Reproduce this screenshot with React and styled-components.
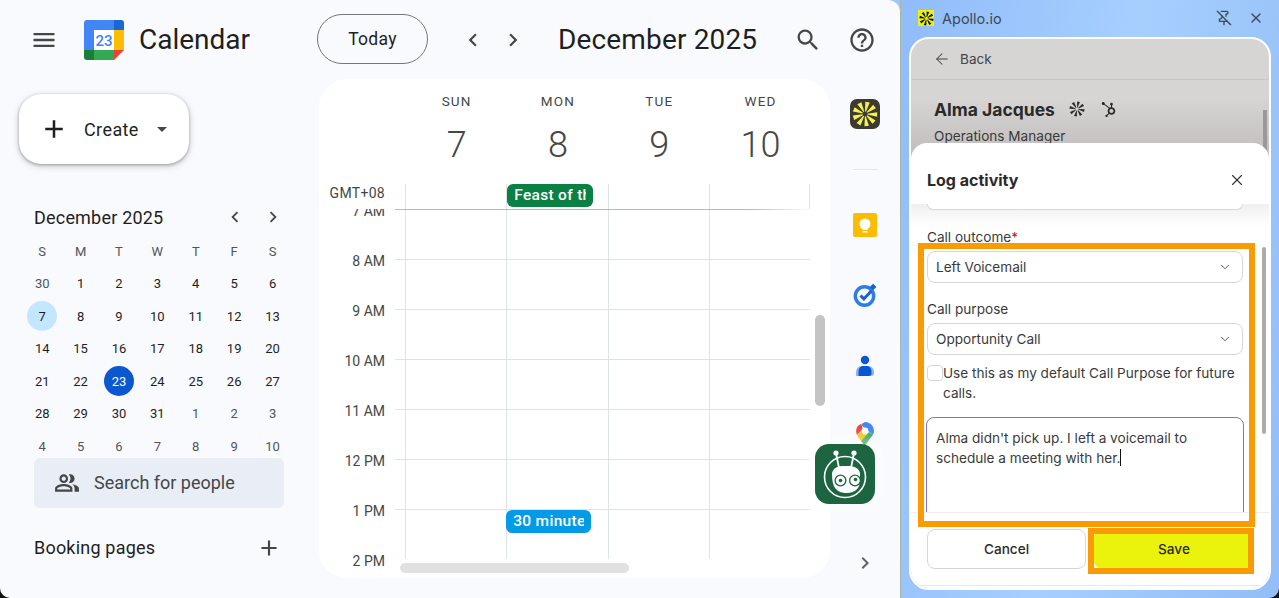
import React from 'react';
import styled, { createGlobalStyle } from 'styled-components';
import {
  MdMenu, MdSearch, MdHelpOutline, MdAdd, MdChevronLeft, MdChevronRight,
  MdArrowDropDown, MdOutlinePeopleAlt,
} from 'react-icons/md';
import { FaHubspot } from 'react-icons/fa';
import { ArrowLeft, X, ChevronDown, PinOff } from 'lucide-react';

const GOOGLE = `Roboto, "Open Sans", sans-serif`;
const APOLLO = `Inter, "Liberation Sans", sans-serif`;

const GlobalStyle = createGlobalStyle`
  html, body { margin: 0; padding: 0; height: 100%; overflow: hidden; }
  * { box-sizing: border-box; }
`;

const Root = styled.div`
  position: relative;
  display: flex;
  width: 1279px;
  height: 598px;
  overflow: hidden;
  background: linear-gradient(to right, #111 0 20px, #9cc5fb 20px 1260px, #111 1260px);
`;

/* ---------- calendar window ---------- */
const Window = styled.div`
  position: relative;
  display: flex;
  flex-direction: column;
  width: 900px;
  height: 598px;
  background: #f8fafd;
  border-radius: 0 12px 0 10px;
  font-family: ${GOOGLE};
  color: #1f1f1f;
`;
const TopBar = styled.header`
  display: flex;
  height: 79px;
  flex-shrink: 0;
  align-items: center;
`;
const Brand = styled.div`
  display: flex;
  align-items: center;
  width: 319px;
  padding-left: 30px;
  color: #444746;
`;
const AppName = styled.span`
  margin-left: 15px;
  font-size: 28px;
  color: #1f1f1f;
`;
const Logo = styled.svg`
  margin-left: 26px;
  flex-shrink: 0;
`;
const Nav = styled.div`
  display: flex;
  flex: 1;
  align-items: center;
  padding-right: 24px;
  color: #444746;
`;
const TodayButton = styled.button`
  width: 111px;
  height: 50px;
  margin: -1px 32px 0 -2px;
  border: 1px solid #747775;
  border-radius: 25px;
  background: transparent;
  color: #1f1f1f;
  font-family: ${GOOGLE};
  font-size: 17.5px;
  font-weight: 400;
  letter-spacing: 0.3px;
`;
const MonthTitle = styled.h1`
  margin: 0 0 0 32px;
  font-size: 28px;
  font-weight: 400;
  letter-spacing: 0.15px;
  color: #1f1f1f;
`;
const NavSpacer = styled.div`
  flex: 1;
`;
const IconGap = styled.span`
  display: inline-block;
  width: ${(p) => p.$w}px;
`;
const Body = styled.div`
  display: flex;
  flex: 1;
  min-height: 0;
`;

/* sidebar */
const Sidebar = styled.aside`
  display: flex;
  flex-direction: column;
  width: 319px;
  padding-top: 15px;
`;
const CreateButton = styled.button`
  display: flex;
  align-items: center;
  width: 170px;
  height: 70px;
  margin-left: 19px;
  padding: 0 0 0 20px;
  border: 0;
  border-radius: 22px;
  background: #fff;
  box-shadow: 0 1px 3px rgba(0, 0, 0, 0.3), 0 2px 6px 1px rgba(0, 0, 0, 0.15);
  color: #1f1f1f;
  font-family: ${GOOGLE};
  font-size: 18px;
  font-weight: 400;
  letter-spacing: 0.4px;
`;
const CreateLabel = styled.span`
  margin: 0 11px 0 15px;
`;
const MiniHead = styled.div`
  display: flex;
  align-items: center;
  height: 28px;
  margin-top: 39px;
  padding: 0 34px;
  font-size: 18px;
  letter-spacing: 0.2px;
  color: #1f1f1f;
`;
const MiniTitle = styled.span`
  flex: 1;
`;
const MiniArrows = styled.div`
  display: flex;
  gap: 16px;
  margin-right: 1px;
  color: #444746;
`;
const MiniGrid = styled.div`
  display: grid;
  grid-template-columns: repeat(7, 38.4px);
  grid-auto-rows: 32.5px;
  margin: 4px 0 0 23px;
`;
const MiniCell = styled.div`
  display: flex;
  align-items: center;
  justify-content: center;
  font-size: 13px;
  color: ${(p) => (p.$head || p.$muted ? '#50555a' : '#1f1f1f')};
`;
const DayDot = styled.span`
  display: flex;
  align-items: center;
  justify-content: center;
  width: 30px;
  height: 30px;
  border-radius: 50%;
  background: ${(p) => (p.$today ? '#0b57d0' : p.$picked ? '#c2e7ff' : 'transparent')};
  color: ${(p) => (p.$today ? '#fff' : 'inherit')};
`;
const PeopleSearch = styled.div`
  display: flex;
  align-items: center;
  width: 250px;
  height: 50px;
  margin: -5px 0 0 34px;
  padding-left: 20px;
  border-radius: 6px;
  background: #e9eef6;
  color: #444746;
  font-size: 18px;
`;
const PeopleLabel = styled.span`
  margin-left: 14px;
`;
const BookingRow = styled.div`
  display: flex;
  align-items: center;
  justify-content: space-between;
  height: 28px;
  margin-top: 26px;
  padding: 0 37px 0 34px;
  font-size: 18px;
  letter-spacing: 0.2px;
  color: #1f1f1f;
`;

/* day view card */
const Card = styled.main`
  position: relative;
  display: flex;
  flex-direction: column;
  width: 511px;
  height: 499px;
  border-radius: 28px;
  background: #fff;
  overflow: hidden;
`;
const DayHeads = styled.div`
  display: grid;
  grid-template-columns: repeat(4, 101.3px);
  padding: 14px 0 0 87px;
  text-align: center;
`;
const DayName = styled.div`
  height: 16px;
  line-height: 16px;
  font-size: 13.5px;
  letter-spacing: 1.2px;
  color: #444746;
`;
const DayNumber = styled.div`
  height: 40px;
  margin-top: 16px;
  line-height: 40px;
  font-size: 36px;
  font-weight: 300;
  color: #444746;
`;
const AllDayRow = styled.div`
  display: flex;
  height: 25px;
  margin-top: 19px;
  flex-shrink: 0;
`;
const TimeZone = styled.div`
  width: 86px;
  padding-right: 20px;
  line-height: 18px;
  text-align: right;
  font-size: 14px;
  letter-spacing: 0.3px;
  color: #444746;
`;
const AllDayCell = styled.div`
  width: 101.3px;
  border-left: 1px solid #dde3ea;
  ${(p) => p.$last && 'border-right: 1px solid #dde3ea;'}
`;
const EventChip = styled.div`
  width: ${(p) => p.$w}px;
  height: 23px;
  padding: 0 7px;
  border-radius: 6px;
  background: ${(p) => p.$color};
  color: #fff;
  font-size: 15.5px;
  font-weight: 500;
  letter-spacing: 0.3px;
  line-height: 23px;
`;
const ChipText = styled.span`
  display: block;
  overflow: hidden;
  white-space: nowrap;
`;
const HoursArea = styled.div`
  flex: 1;
  min-height: 0;
  overflow: hidden;
`;
const HourRow = styled.div`
  display: flex;
  height: 50px;
`;
const HourLabel = styled.div`
  width: 76px;
  height: 16px;
  margin-top: -6px;
  padding-right: 10px;
  line-height: 16px;
  text-align: right;
  font-size: 14px;
  color: #444746;
`;
const HourCells = styled.div`
  display: flex;
  width: 415px;
  padding-left: 10px;
  border-top: 1px solid #dde3ea;
  ${(p) => p.$strong && 'border-image: linear-gradient(to right, #b4b7bb 85%, #fff) 1;'}
`;
const HourCell = styled.div`
  position: relative;
  width: 101.3px;
  border-left: 1px solid #dde3ea;
`;
const FloatingEvent = styled.div`
  position: absolute;
  top: 0;
  left: -1px;
`;
const VScroll = styled.div`
  position: absolute;
  top: 236px;
  left: 496px;
  width: 10px;
  height: 91px;
  border-radius: 5px;
  background: #c4c4c4;
`;
const HScroll = styled.div`
  position: absolute;
  top: 484px;
  left: 81px;
  width: 229px;
  height: 10px;
  border-radius: 5px;
  background: #e1e1e1;
`;

/* right rail */
const Rail = styled.aside`
  display: flex;
  flex-direction: column;
  align-items: center;
  width: 70px;
  padding-top: 20px;
`;
const RailSlot = styled.div`
  display: flex;
  margin-top: ${(p) => p.$top}px;
`;
const RailRule = styled.div`
  width: 25px;
  height: 1px;
  margin-top: 40px;
  background: #e3e6ea;
`;
const ApolloBadge = styled.div`
  display: flex;
  align-items: center;
  justify-content: center;
  width: 30px;
  height: 30px;
  border-radius: 7px;
  background: #3d3a35;
`;
const BotButton = styled.div`
  position: absolute;
  top: 444px;
  left: 815px;
  width: 60px;
  height: 60px;
  box-shadow: 0 0 16px 6px rgba(255, 255, 255, 0.5);
  border-radius: 14px;
`;

/* ---------- apollo panel ---------- */
const Panel = styled.section`
  display: flex;
  flex-direction: column;
  width: 379px;
  height: 598px;
  padding-left: 8px;
  border-left: 1px solid #a9b6a6;
  border-radius: 0 0 10px 0;
  background: linear-gradient(100deg, #90bcfa 0%, #a7cffe 50%, #92bdf6 100%);
  font-family: ${APOLLO};
  color: #333;
`;
const TitleBar = styled.div`
  display: flex;
  align-items: center;
  height: 37px;
  padding: 0 15px 1px 9px;
  font-size: 14.5px;
  color: #3f4a55;
`;
const TitleLogo = styled.div`
  display: flex;
  align-items: center;
  justify-content: center;
  width: 16px;
  height: 16px;
  margin-right: 8px;
  background: #eef20e;
`;
const TitleName = styled.span`
  flex: 1;
`;
const TitleActions = styled.div`
  display: flex;
  align-items: center;
  gap: 16px;
`;
const Shell = styled.div`
  position: relative;
  width: 362px;
  height: 553px;
  border: 2px solid #fff;
  border-radius: 20px;
  background: linear-gradient(#d6d5d4 0 60px, #c3c0bf 110px);
  overflow: hidden;
`;
const BackRow = styled.div`
  display: flex;
  align-items: center;
  gap: 9px;
  height: 41px;
  padding: 0 0 1px 22px;
  border-bottom: 1px solid #c7c6c5;
  font-size: 13.6px;
  color: #444;
`;
const Person = styled.div`
  padding: 17px 23px 0;
`;
const PersonName = styled.div`
  display: flex;
  align-items: center;
  height: 24px;
  font-size: 17.5px;
  font-weight: 700;
  color: #2a2a2a;
`;
const PersonMark = styled.span`
  display: flex;
  margin-left: ${(p) => p.$left}px;
`;
const PersonRole = styled.div`
  margin-top: 5px;
  line-height: 20px;
  font-size: 13.6px;
  color: #3a3a3a;
`;
const ShellScroll = styled.div`
  position: absolute;
  top: 71px;
  right: 2px;
  width: 4px;
  height: 40px;
  background: #9c9897;
`;
const Sheet = styled.div`
  position: absolute;
  top: 104px;
  right: 0;
  bottom: 0;
  left: 0;
  display: flex;
  flex-direction: column;
  border-radius: 16px 16px 0 0;
  background: #fff;
`;
const SheetHead = styled.div`
  display: flex;
  align-items: center;
  justify-content: space-between;
  height: 61px;
  flex-shrink: 0;
  padding: 13px 23px 0 16px;
  font-size: 16px;
  font-weight: 700;
  color: #2a2a2a;
`;
const Form = styled.div`
  flex: 1;
  min-height: 0;
  padding: 0 26px 0 16px;
  overflow: hidden;
  background: linear-gradient(#efefef, #fff 22px);
`;
const FieldStub = styled.div`
  height: 6px;
  border: 1px solid #d9d9d9;
  border-top: 0;
  border-radius: 0 0 8px 8px;
  background: #fff;
`;
const FieldLabel = styled.div`
  height: 20px;
  margin-top: ${(p) => p.$top}px;
  line-height: 20px;
  font-size: 13.6px;
  color: #3a3a3a;
`;
const Required = styled.span`
  color: #b3261e;
`;
const Select = styled.div`
  display: flex;
  align-items: center;
  justify-content: space-between;
  height: 32px;
  margin-top: 4px;
  padding: 0 10px 1px 8px;
  border: 1px solid #d6d6d6;
  border-radius: 8px;
  background: #fff;
  font-size: 13.6px;
  color: #3a3a3a;
`;
const CheckRow = styled.label`
  display: flex;
  align-items: flex-start;
  margin-top: 8px;
  line-height: 20px;
  font-size: 13.6px;
  color: #3a3a3a;
`;
const CheckBox = styled.span`
  width: 16px;
  height: 16px;
  margin-top: 2px;
  flex-shrink: 0;
  border: 1px solid #d6d6d6;
  border-radius: 4px;
`;
const NoteBox = styled.div`
  height: 120px;
  margin: 14px -1px 0;
  padding: 10px 9px;
  border: 1px solid #8373cc;
  border-radius: 8px;
  line-height: 20px;
  font-size: 13.6px;
  color: #3a3a3a;
`;
const Caret = styled.span`
  display: inline-block;
  width: 1px;
  height: 17px;
  vertical-align: -3px;
  background: #111;
`;
const SheetFoot = styled.div`
  flex-shrink: 0;
  height: 76px;
  padding-top: 16px;
  border-top: 1px solid #eee;
`;
const FootButtons = styled.div`
  display: flex;
  gap: 8px;
  padding: 0 15px 16px 16px;
  border-bottom: 1px solid #e8e8e8;
`;
const ActionButton = styled.button`
  height: 40px;
  padding: 0 0 1px;
  border: 1px solid ${(p) => (p.$primary ? '#ebf30c' : '#d6d6d6')};
  border-radius: 8px;
  background: ${(p) => (p.$primary ? '#ebf30c' : '#fff')};
  color: #2a2a2a;
  font-family: ${APOLLO};
  font-size: 13.6px;
  font-weight: 500;
  ${(p) => (p.$primary ? 'flex: 1;' : 'width: 159px;')}
`;
const SheetScroll = styled.div`
  position: absolute;
  top: 104px;
  right: 3px;
  width: 4px;
  height: 187px;
  border-radius: 2px;
  background: #aeaaa8;
`;
const Callout = styled.div`
  position: absolute;
  top: ${(p) => p.$top}px;
  left: ${(p) => p.$left}px;
  width: ${(p) => p.$w}px;
  height: ${(p) => p.$h}px;
  border: 6px solid #f99b05;
  pointer-events: none;
`;

/* ---------- drawings ---------- */
const Burst = ({ size, color, spokes = 9 }) => (
  <svg width={size} height={size} viewBox="0 0 24 24">
    {Array.from({ length: spokes }, (_, i) => (
      <polygon
        key={i}
        points="11.6,9.8 9.9,0.8 14.1,0.8 12.4,9.8"
        fill={color}
        transform={`rotate(${(360 / spokes) * i + 12} 12 12)`}
      />
    ))}
  </svg>
);

const CalendarLogo = () => (
  <Logo width="40" height="40" viewBox="0 0 40 40">
    <path d="M3 0h27v10H10v20H0V3a3 3 0 0 1 3-3z" fill="#4285f4" />
    <path d="M30 0h7a3 3 0 0 1 3 3v7H30z" fill="#1967d2" />
    <rect x="30" y="10" width="10" height="20" fill="#fbbc04" />
    <rect x="10" y="30" width="20" height="10" fill="#34a853" />
    <path d="M0 30h10v10H3a3 3 0 0 1-3-3z" fill="#188038" />
    <path d="M30 30h10L30 40z" fill="#ea4335" />
    <rect x="10" y="10" width="20" height="20" fill="#fff" />
    <text x="20" y="26" textAnchor="middle" fontFamily="Roboto, sans-serif" fontSize="15" fontWeight="500" fill="#4285f4">23</text>
  </Logo>
);

const KeepIcon = () => (
  <svg width="24" height="24" viewBox="0 0 24 24">
    <rect width="24" height="24" rx="2" fill="#fbbc04" />
    <circle cx="12" cy="11" r="5.5" fill="#fff" />
    <rect x="9.5" y="15" width="5" height="2" fill="#fff" />
    <rect x="9.5" y="18" width="5" height="1.5" fill="#fff" />
  </svg>
);

const TasksIcon = () => (
  <svg width="24" height="24" viewBox="0 0 24 24">
    <circle cx="11.5" cy="13" r="9.2" fill="none" stroke="#2b7de9" strokeWidth="3.4" />
    <path d="M7.5 12.5l3.4 3.4 7.4-8" fill="none" stroke="#1a5fd0" strokeWidth="3" />
    <rect x="17.8" y="1.8" width="4.6" height="4.6" transform="rotate(45 20.1 4.1)" fill="#1a5fd0" />
  </svg>
);

const ContactIcon = () => (
  <svg width="24" height="24" viewBox="0 0 24 24">
    <circle cx="12" cy="6" r="4.2" fill="#0b57d0" />
    <path d="M3 22v-3.5c0-4 2.5-6.5 6-6.5h6c3.5 0 6 2.5 6 6.5V19a3 3 0 0 1-3 3z" fill="#8ab4f8" />
    <path d="M5.5 22v-4c0-3.5 2-6 4.5-6h4c2.500 0 4.500 2.500 4.500 6v1a3 3 0 0 1-3 3z" fill="#0b57d0" />
  </svg>
);

const MapsIcon = () => (
  <svg width="18" height="24" viewBox="0 0 18 24">
    <path d="M9 0a9 9 0 0 1 8 13L5 3a9 9 0 0 1 4-3z" fill="#4285f4" />
    <path d="M5 2A9 9 0 0 0 1.5 4.5 9 9 0 0 0 1 13l6-6z" fill="#ea4335" />
    <path d="M1 13c1 2.5 3 4.5 4 6l8-9-4-3z" fill="#fbbc04" />
    <path d="M5 19c1.5 2 3 3.5 4 5 1-2 3-5 8-11l-4-3z" fill="#34a853" />
    <circle cx="9" cy="9" r="3.4" fill="#fff" />
  </svg>
);

const BotIcon = () => (
  <svg width="60" height="60" viewBox="0 0 60 60">
    <rect width="60" height="60" rx="14" fill="#1c6540" />
    <circle cx="30" cy="33" r="20.5" fill="none" stroke="#fff" strokeWidth="1.6" />
    <path d="M21 9l3 15M39 9l-3 15" stroke="#fff" strokeWidth="1.8" />
    <circle cx="21" cy="9" r="2.6" fill="#fff" />
    <circle cx="39" cy="9" r="2.6" fill="#fff" />
    <path d="M17 30c0-4 4-8 10-8h7c7 0 11 4 11 8v7c0 8-6 12-13 12-5 0-9-1-12-5-2-3-3-8-3-14z" fill="#fff" />
    <circle cx="25.5" cy="36.5" r="5.4" fill="#fff" stroke="#1c6540" strokeWidth="1.3" />
    <circle cx="25.5" cy="36.5" r="1.8" fill="#1c6540" />
    <circle cx="40" cy="36.5" r="5.4" fill="#fff" stroke="#1c6540" strokeWidth="1.3" />
    <circle cx="40.5" cy="35.5" r="1.8" fill="#1c6540" />
  </svg>
);

/* ---------- data ---------- */
const MINI_HEAD = ['S', 'M', 'T', 'W', 'T', 'F', 'S'];
const MINI_DAYS = [
  30, 1, 2, 3, 4, 5, 6,
  7, 8, 9, 10, 11, 12, 13,
  14, 15, 16, 17, 18, 19, 20,
  21, 22, 23, 24, 25, 26, 27,
  28, 29, 30, 31, 1, 2, 3,
  4, 5, 6, 7, 8, 9, 10,
];
const WEEK = [['SUN', 7], ['MON', 8], ['TUE', 9], ['WED', 10]];
const HOURS = ['7 AM', '8 AM', '9 AM', '10 AM', '11 AM', '12 PM', '1 PM'];

const MiniCalendar = () => (
  <MiniGrid>
    {MINI_HEAD.map((d, i) => <MiniCell key={i} $head>{d}</MiniCell>)}
    {MINI_DAYS.map((d, i) => (
      <MiniCell key={i} $muted={i === 0 || i > 31}>
        <DayDot $picked={i === 7} $today={i === 23}>{d}</DayDot>
      </MiniCell>
    ))}
  </MiniGrid>
);

const DayView = () => (
  <Card>
    <DayHeads>
      {WEEK.map(([name]) => <DayName key={name}>{name}</DayName>)}
      {WEEK.map(([name, num]) => <DayNumber key={name}>{num}</DayNumber>)}
    </DayHeads>
    <AllDayRow>
      <TimeZone>GMT+08</TimeZone>
      <AllDayCell />
      <AllDayCell>
        <EventChip $w={86} $color="#0b8043"><ChipText>Feast of the Immaculate Conception</ChipText></EventChip>
      </AllDayCell>
      <AllDayCell />
      <AllDayCell $last />
    </AllDayRow>
    <HoursArea>
      {HOURS.map((h, i) => (
        <HourRow key={h}>
          <HourLabel>{h}</HourLabel>
          <HourCells $strong={i === 0}>
            {[0, 1, 2, 3].map((c) => (
              <HourCell key={c}>
                {h === '1 PM' && c === 1 && (
                  <FloatingEvent>
                    <EventChip $w={85} $color="#039be5"><ChipText>30 minute meeting</ChipText></EventChip>
                  </FloatingEvent>
                )}
              </HourCell>
            ))}
          </HourCells>
        </HourRow>
      ))}
      <HourRow>
        <HourLabel>2 PM</HourLabel>
      </HourRow>
    </HoursArea>
    <VScroll />
    <HScroll />
  </Card>
);

const LogSheet = () => (
  <Sheet>
    <SheetHead>
      Log activity
      <X size={18} strokeWidth={1.5} color="#333" />
    </SheetHead>
    <Form>
      <FieldStub />
      <FieldLabel $top={17}>Call outcome<Required>*</Required></FieldLabel>
      <Select>Left Voicemail <ChevronDown size={14} strokeWidth={1.5} /></Select>
      <FieldLabel $top={16}>Call purpose</FieldLabel>
      <Select>Opportunity Call <ChevronDown size={14} strokeWidth={1.5} /></Select>
      <CheckRow>
        <CheckBox />
        Use this as my default Call Purpose for future calls.
      </CheckRow>
      <NoteBox>
        Alma didn't pick up. I left a voicemail to schedule a meeting with her.<Caret />
      </NoteBox>
    </Form>
    <SheetFoot>
      <FootButtons>
        <ActionButton>Cancel</ActionButton>
        <ActionButton $primary>Save</ActionButton>
      </FootButtons>
    </SheetFoot>
    <SheetScroll />
    <Callout $left={7} $top={100} $w={337} $h={284} />
    <Callout $left={177} $top={385} $w={166} $h={46} />
  </Sheet>
);

export default function App() {
  return (
    <>
      <GlobalStyle />
      <Root>
        <Window>
          <TopBar>
            <Brand>
              <MdMenu size={28} />
              <CalendarLogo />
              <AppName>Calendar</AppName>
            </Brand>
            <Nav>
              <TodayButton>Today</TodayButton>
              <MdChevronLeft size={26} />
              <IconGap $w={14} />
              <MdChevronRight size={26} />
              <MonthTitle>December 2025</MonthTitle>
              <NavSpacer />
              <MdSearch size={28} />
              <IconGap $w={26} />
              <MdHelpOutline size={28} />
            </Nav>
          </TopBar>
          <Body>
            <Sidebar>
              <CreateButton>
                <MdAdd size={30} />
                <CreateLabel>Create</CreateLabel>
                <MdArrowDropDown size={24} color="#444746" />
              </CreateButton>
              <MiniHead>
                <MiniTitle>December 2025</MiniTitle>
                <MiniArrows>
                  <MdChevronLeft size={22} />
                  <MdChevronRight size={22} />
                </MiniArrows>
              </MiniHead>
              <MiniCalendar />
              <PeopleSearch>
                <MdOutlinePeopleAlt size={26} />
                <PeopleLabel>Search for people</PeopleLabel>
              </PeopleSearch>
              <BookingRow>
                Booking pages
                <MdAdd size={26} color="#444746" />
              </BookingRow>
            </Sidebar>
            <DayView />
            <Rail>
              <ApolloBadge><Burst size={26} color="#f4f447" /></ApolloBadge>
              <RailRule />
              <RailSlot $top={43}><KeepIcon /></RailSlot>
              <RailSlot $top={46}><TasksIcon /></RailSlot>
              <RailSlot $top={47}><ContactIcon /></RailSlot>
              <RailSlot $top={44}><MapsIcon /></RailSlot>
              <RailSlot $top={105}><MdChevronRight size={24} color="#5f6368" /></RailSlot>
            </Rail>
          </Body>
          <BotButton><BotIcon /></BotButton>
        </Window>
        <Panel>
          <TitleBar>
            <TitleLogo><Burst size={15} color="#111" spokes={8} /></TitleLogo>
            <TitleName>Apollo.io</TitleName>
            <TitleActions>
              <PinOff size={16} color="#3f4a55" />
              <X size={16} color="#3f4a55" />
            </TitleActions>
          </TitleBar>
          <Shell>
            <BackRow>
              <ArrowLeft size={18} strokeWidth={1.4} />
              Back
            </BackRow>
            <Person>
              <PersonName>
                Alma Jacques
                <PersonMark $left={14}><Burst size={16} color="#2a2a2a" spokes={8} /></PersonMark>
                <PersonMark $left={16}><FaHubspot size={15} color="#2a2a2a" /></PersonMark>
              </PersonName>
              <PersonRole>Operations Manager</PersonRole>
            </Person>
            <ShellScroll />
            <LogSheet />
          </Shell>
        </Panel>
      </Root>
    </>
  );
}
